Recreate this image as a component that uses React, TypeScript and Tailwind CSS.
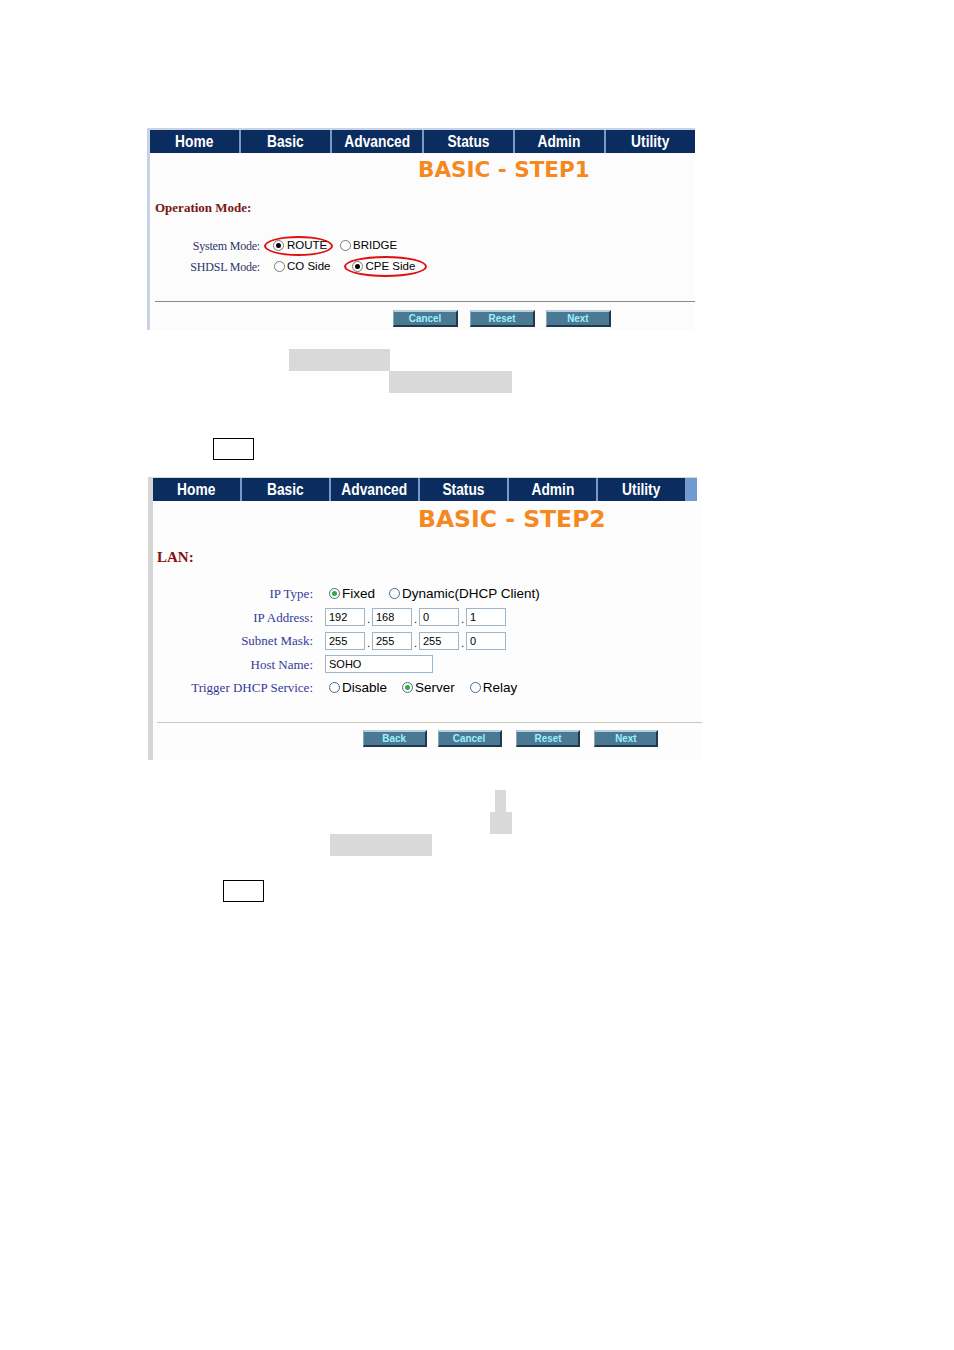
import React from 'react';

const tabs = ['Home', 'Basic', 'Advanced', 'Status', 'Admin', 'Utility'];

const navFont = { fontFamily: '"Liberation Sans Narrow", "Liberation Sans", Arial, sans-serif' };

const Radio = ({ on, green }: { on?: boolean; green?: boolean }) => (
  <span className={`inline-flex items-center justify-center w-[11px] h-[11px] rounded-full border bg-white shrink-0 ${green ? 'border-[#4a6a8a]' : 'border-[#7a7a7a]'}`}>
    {on && <span className={`w-[5px] h-[5px] rounded-full ${green ? 'bg-[#2fae3c]' : 'bg-black'}`} />}
  </span>
);

const NavBtn = ({ label, w }: { label: string; w: number }) => (
  <div
    style={{ width: w }}
    className="h-[17px] flex items-center justify-center bg-[#4b7893] border-t-2 border-l border-t-[#b5cfdc] border-l-[#86a7bb] border-r-2 border-b-2 border-r-[#1f3a50] border-b-[#1f3a50] text-[11px] font-bold text-[#9af3ff] leading-none"
  >
    <span className="inline-block scale-x-[0.9]" style={navFont}>{label}</span>
  </div>
);

const Field = ({ v, w = 40 }: { v: string; w?: number }) => (
  <div style={{ width: w }} className="h-[18px] border border-[#9eb4c8] bg-white pl-[3px] flex items-center text-[11px] text-black">
    {v}
  </div>
);

const Dot = () => <span className="w-[7px] text-center text-[11px] self-end leading-[14px]">.</span>;

const Tab = ({ t, className }: { t: string; className: string }) => (
  <div className={`bg-[#0a2c5e] text-white font-bold text-[16px] flex items-center justify-center ${className}`} style={navFont}>
    <span className="inline-block scale-x-[0.86] scale-y-[1.08]">{t}</span>
  </div>
);

const App = () => {
  const serif = { fontFamily: '"Liberation Serif", "Times New Roman", serif' };
  const sans = { fontFamily: '"Liberation Sans", Arial, sans-serif' };
  const title = { fontFamily: '"DejaVu Sans", Verdana, sans-serif' };

  return (
    <div className="w-[954px] h-[1350px] bg-white relative" style={sans}>
      <div className="pt-[128px]">
        {/* step 1 panel */}
        <div className="ml-[147px] w-[548px] border-l-[3px] border-[#c9d3e6] bg-[#fcfcfc]">
          <div className="border-t-2 border-[#c9d3e6] flex h-[25px] bg-[#7b98c6] gap-[2px]">
            {tabs.map((t) => (
              <Tab key={t} t={t} className="flex-1" />
            ))}
          </div>
          <div className="pt-[4px]">
            <div className="h-[26px] leading-[26px] pl-[268px] text-[21.5px] font-bold text-[#f5881f]" style={title}>
              BASIC - STEP1
            </div>
            <div className="mt-[16px] h-[18px] leading-[18px] pl-[5px] text-[13px] font-bold text-[#7a1616]" style={serif}>
              Operation Mode:
            </div>
            <div className="mt-[18px] h-[21px] flex items-center text-[11.5px] text-black">
              <div className="w-[110px] text-right text-[12px] text-[#2e3566] tracking-[-0.2px]" style={serif}>System Mode:</div>
              <span className="ml-[4px] h-[20px] w-[69px] inline-flex items-center gap-[3px] pl-[7px] border-2 border-[#e01010] rounded-[50%]">
                <Radio on />
                <span>ROUTE</span>
              </span>
              <span className="ml-[7px] inline-flex items-center gap-[2px]">
                <Radio />
                <span>BRIDGE</span>
              </span>
            </div>
            <div className="h-[21px] flex items-center text-[11.5px] text-black">
              <div className="w-[110px] text-right text-[12px] text-[#2e3566] tracking-[-0.2px]" style={serif}>SHDSL Mode:</div>
              <span className="ml-[14px] inline-flex items-center gap-[2px]">
                <Radio />
                <span>CO Side</span>
              </span>
              <span className="ml-[14px] h-[21px] w-[83px] inline-flex items-center gap-[2px] pl-[6px] border-2 border-[#e01010] rounded-[50%]">
                <Radio on />
                <span>CPE Side</span>
              </span>
            </div>
            <div className="mt-[24px] ml-[5px] border-t border-[#8c8c8c]" />
            <div className="mt-[8px] pb-[3px] flex">
              <div className="ml-[243px]"><NavBtn label="Cancel" w={65} /></div>
              <div className="ml-[12px]"><NavBtn label="Reset" w={65} /></div>
              <div className="ml-[11px]"><NavBtn label="Next" w={65} /></div>
            </div>
          </div>
        </div>

        {/* gaps between panels */}
        <div className="mt-[19px] ml-[289px] w-[101px] h-[22px] bg-[#d9d9d9]" />
        <div className="ml-[389px] w-[123px] h-[22px] bg-[#d9d9d9]" />
        <div className="mt-[45px] ml-[213px] w-[41px] h-[22px] border border-black" />

        {/* step 2 panel */}
        <div className="mt-[17px] ml-[148px] w-[554px] border-l-[5px] border-[#d6d6d6] bg-[#fdfdfd]">
          <div className="border-t border-[#d6d6d6] flex h-[24px] w-[544px] bg-[#7b98c6] gap-[2px]">
            {tabs.map((t) => (
              <Tab key={t} t={t} className="w-[87px]" />
            ))}
            <div className="flex-1 bg-[#6f9bd0]" />
          </div>
          <div className="pt-[4px]">
            <div className="h-[28px] leading-[28px] pl-[265px] text-[23.5px] font-bold text-[#f5881f]" style={title}>
              BASIC - STEP2
            </div>
            <div className="mt-[15px] h-[18px] leading-[18px] pl-[4px] text-[15px] font-bold text-[#8a0e0e]" style={serif}>
              LAN:
            </div>
            <div className="mt-[16px] text-[13.5px] text-black">
              <div className="h-[23.5px] flex items-center">
                <div className="w-[160px] text-right text-[13px] text-[#35399a]" style={serif}>IP Type:</div>
                <span className="ml-[16px] inline-flex items-center gap-[2px]"><Radio on green />Fixed</span>
                <span className="ml-[14px] inline-flex items-center gap-[2px]"><Radio green />Dynamic(DHCP Client)</span>
              </div>
              <div className="h-[23.5px] flex items-center">
                <div className="w-[160px] text-right text-[13px] text-[#35399a]" style={serif}>IP Address:</div>
                <div className="ml-[12px] flex">
                  <Field v="192" /><Dot /><Field v="168" /><Dot /><Field v="0" /><Dot /><Field v="1" />
                </div>
              </div>
              <div className="h-[23.5px] flex items-center">
                <div className="w-[160px] text-right text-[13px] text-[#35399a]" style={serif}>Subnet Mask:</div>
                <div className="ml-[12px] flex">
                  <Field v="255" /><Dot /><Field v="255" /><Dot /><Field v="255" /><Dot /><Field v="0" />
                </div>
              </div>
              <div className="h-[23.5px] flex items-center">
                <div className="w-[160px] text-right text-[13px] text-[#35399a]" style={serif}>Host Name:</div>
                <div className="ml-[12px]"><Field v="SOHO" w={108} /></div>
              </div>
              <div className="h-[23.5px] flex items-center">
                <div className="w-[160px] text-right text-[13px] text-[#35399a]" style={serif}>Trigger DHCP Service:</div>
                <span className="ml-[16px] inline-flex items-center gap-[2px]"><Radio green />Disable</span>
                <span className="ml-[15px] inline-flex items-center gap-[2px]"><Radio on green />Server</span>
                <span className="ml-[15px] inline-flex items-center gap-[2px]"><Radio green />Relay</span>
              </div>
            </div>
            <div className="mt-[22px] ml-[4px] border-t border-[#c9c9b9]" />
            <div className="mt-[7px] pb-[13px] flex">
              <div className="ml-[210px]"><NavBtn label="Back" w={64} /></div>
              <div className="ml-[11px]"><NavBtn label="Cancel" w={64} /></div>
              <div className="ml-[14px]"><NavBtn label="Reset" w={64} /></div>
              <div className="ml-[14px]"><NavBtn label="Next" w={64} /></div>
            </div>
          </div>
        </div>

        {/* below step 2 */}
        <div className="mt-[30px] ml-[495px] w-[11px] h-[22px] bg-[#d9d9d9]" />
        <div className="ml-[490px] w-[22px] h-[22px] bg-[#d9d9d9]" />
        <div className="ml-[330px] w-[102px] h-[22px] bg-[#d9d9d9]" />
        <div className="mt-[24px] ml-[223px] w-[41px] h-[22px] border border-black" />
      </div>
    </div>
  );
};

export default App;
